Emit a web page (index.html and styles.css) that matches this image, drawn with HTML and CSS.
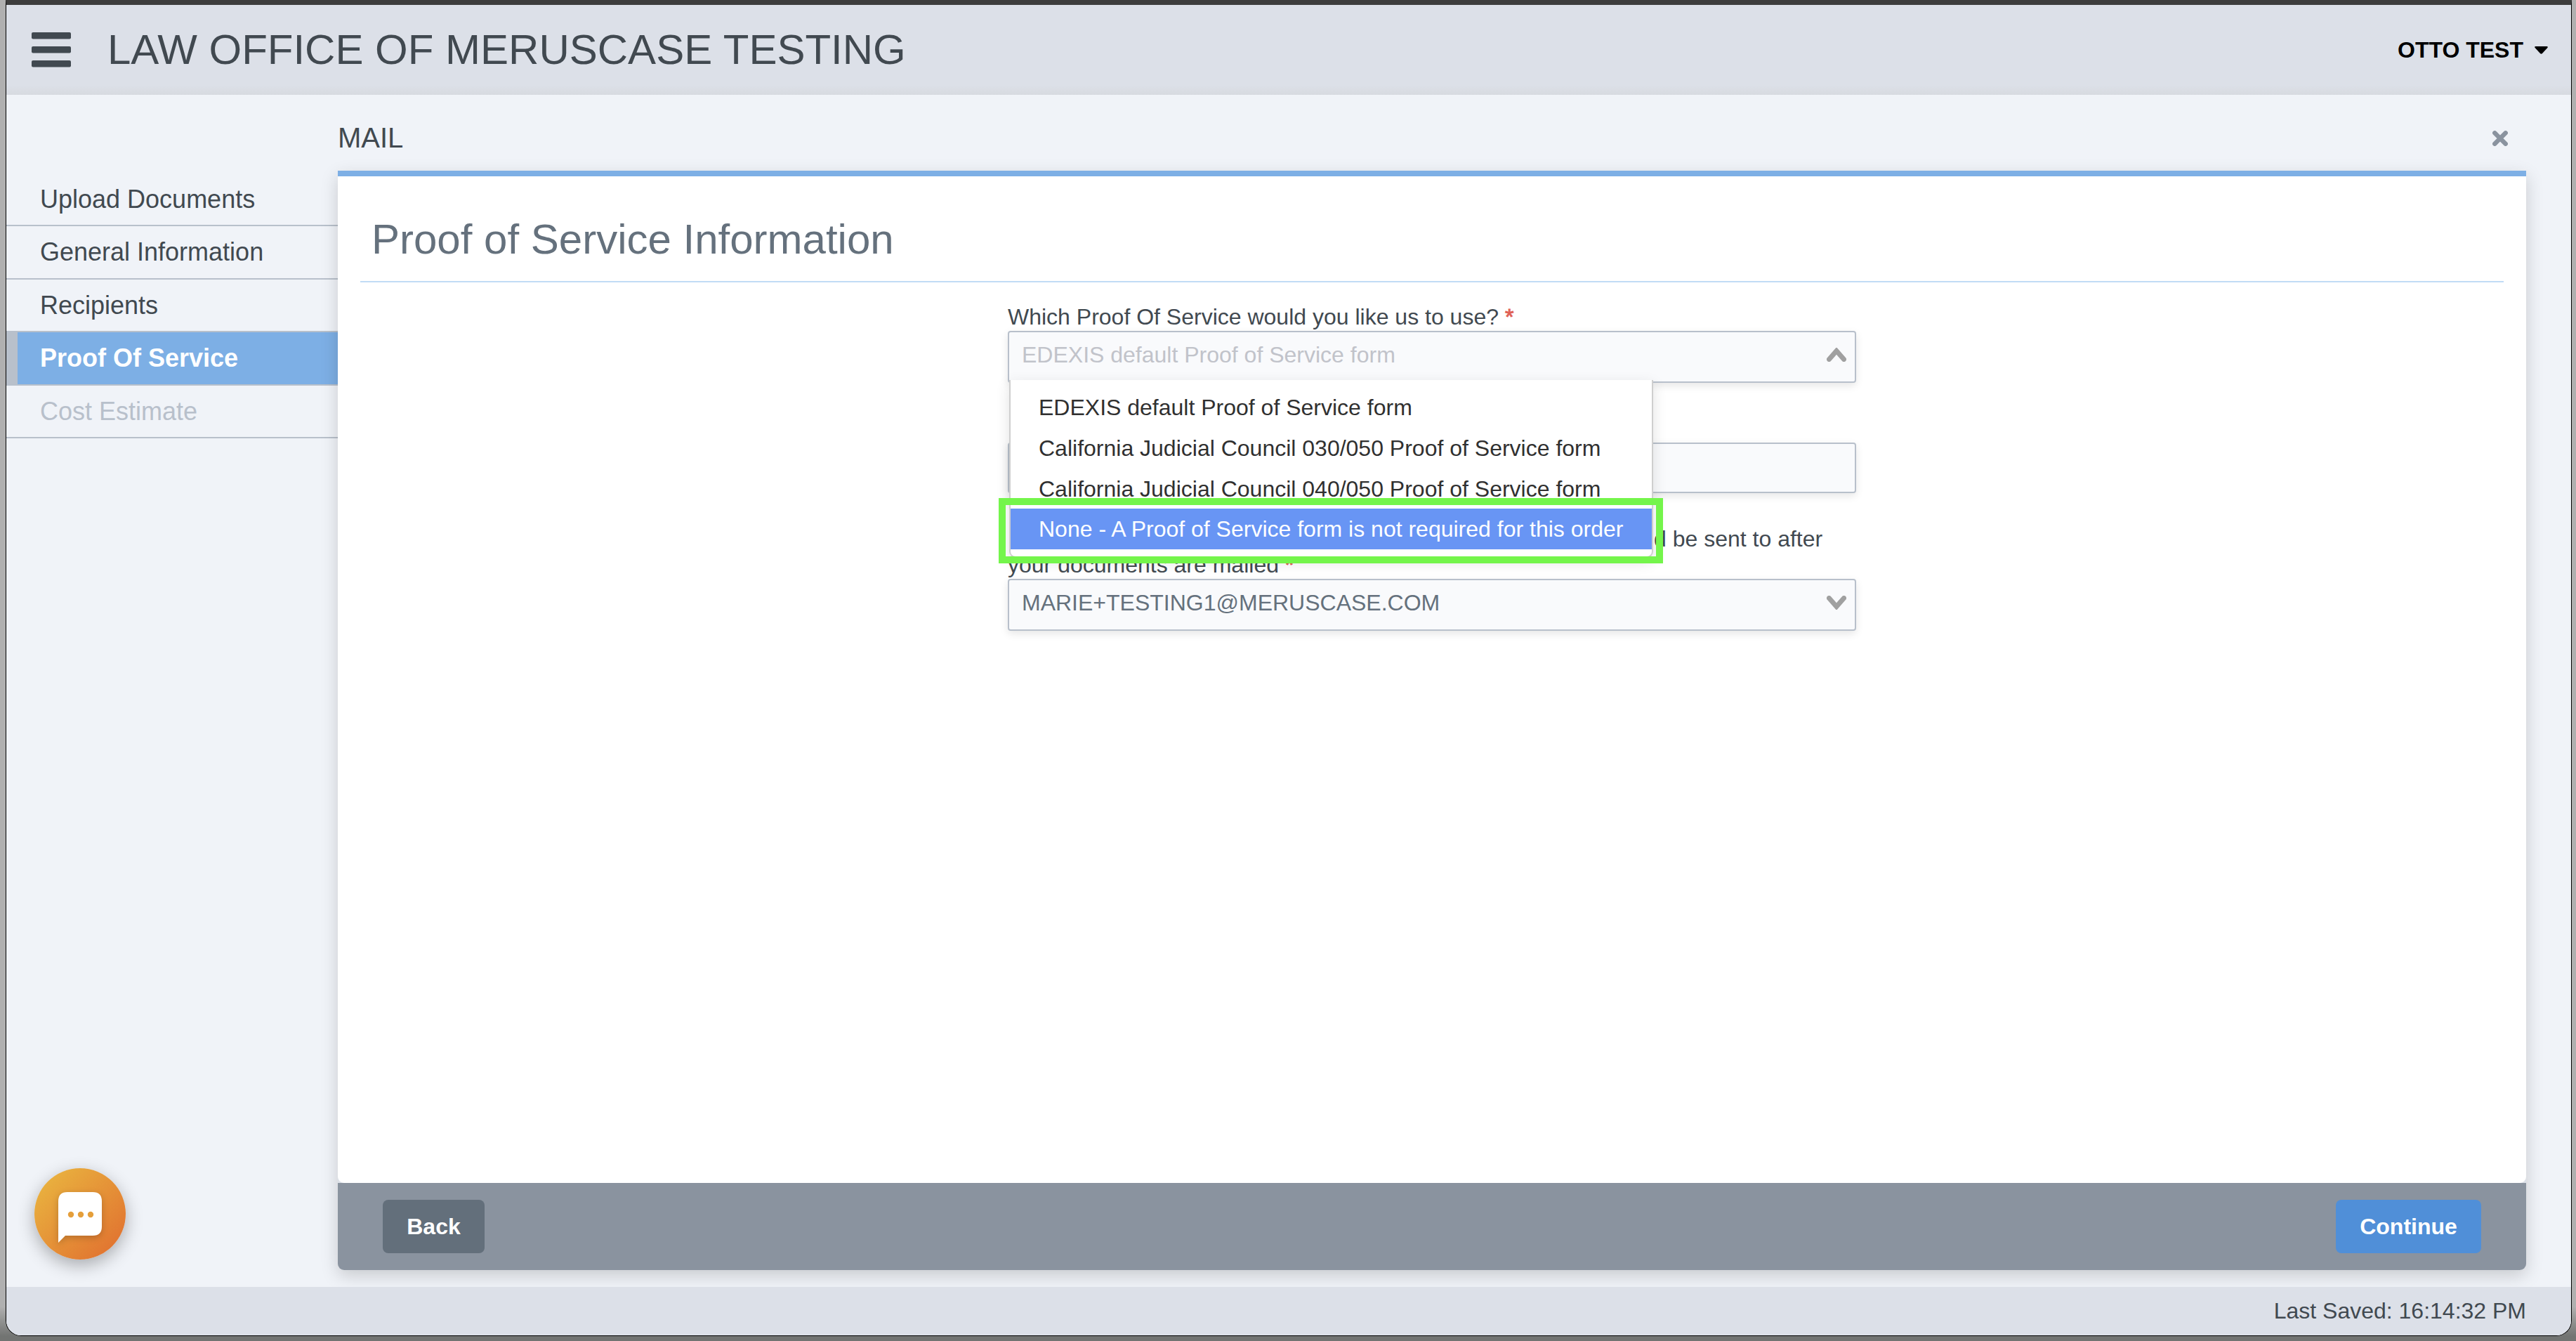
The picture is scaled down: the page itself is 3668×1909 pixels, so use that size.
FILE: index.html
```
<!DOCTYPE html>
<html lang="en">
<head>
    <meta charset="UTF-8" />
    <meta name="viewport" content="width=device-width, initial-scale=1" />
    <title>Mail - Proof of Service</title>
    <link rel="stylesheet" href="styles.css">
</head>
<body>
    <div class="window">
        <header class="top-bar">
            <svg class="menu-icon" width="56" height="50" viewBox="0 0 56 50">
                <rect x="0" y="0" width="56" height="9.5" rx="2"/>
                <rect x="0" y="20" width="56" height="9.5" rx="2"/>
                <rect x="0" y="40" width="56" height="9.5" rx="2"/>
            </svg>
            <h1>LAW OFFICE OF MERUSCASE TESTING</h1>
            <div class="user">
                <span>OTTO TEST</span>
                <svg width="19" height="11" viewBox="0 0 19 11">
                    <path d="M1.5 0h16q2 .3.9 2L11 10q-1.500 1.500-3 0L.6 2Q-.5.300 1.500 0z"/>
                </svg>
            </div>
        </header>

        <div class="main">
            <nav>
                <a class="nav-item">Upload Documents</a>
                <a class="nav-item">General Information</a>
                <a class="nav-item">Recipients</a>
                <a class="nav-item active">Proof Of Service</a>
                <a class="nav-item disabled">Cost Estimate</a>
            </nav>

            <section class="content">
                <div class="content-head">
                    <span>MAIL</span>
                    <svg class="close" width="22" height="22" viewBox="0 0 22 22">
                        <path d="M3.300 3.300L18.700 18.700M18.700 3.300L3.300 18.700"/>
                    </svg>
                </div>
                <div class="panel">
                    <div class="panel-body">
                        <h2>Proof of Service Information</h2>
                        <form>
                            <div class="field">
                                <label>Which Proof Of Service would you like us to use? <span class="req">*</span></label>
                                <div class="select placeholder">
                                    <span>EDEXIS default Proof of Service form</span>
                                    <svg width="28" height="20" viewBox="0 0 28 20"><path d="M3.500 16.500L14 4.500L24.500 16.500"/></svg>
                                    <ul class="dropdown">
                                        <li>EDEXIS default Proof of Service form</li>
                                        <li>California Judicial Council 030/050 Proof of Service form</li>
                                        <li>California Judicial Council 040/050 Proof of Service form</li>
                                        <li class="selected">None - A Proof of Service form is not required for this order</li>
                                    </ul>
                                    <div class="highlight"></div>
                                </div>
                            </div>
                            <div class="field">
                                <label></label>
                                <div class="select text-input"></div>
                            </div>
                            <div class="field">
                                <label><span class="tail">d be sent to after</span> your documents are mailed <span class="req">*</span></label>
                                <div class="select">
                                    <span>MARIE+TESTING1@MERUSCASE.COM</span>
                                    <svg width="28" height="20" viewBox="0 0 28 20"><path d="M3.500 3.500L14 15.500L24.500 3.500"/></svg>
                                </div>
                            </div>
                        </form>
                    </div>
                    <div class="panel-footer">
                        <button class="back">Back</button>
                        <button class="continue">Continue</button>
                    </div>
                </div>
            </section>
        </div>

        <footer class="status-bar">Last Saved: 16:14:32 PM</footer>

        <!-- floating chat button -->
        <div class="chat">
            <svg width="62" height="72" viewBox="0 0 62 72">
                <path fill="#fff" d="M13 0H49Q62 0 62 13V49Q62 62 49 62H10L0 72V13Q0 0 13 0z"/>
                <circle cx="18" cy="32" r="4.200"/>
                <circle cx="32" cy="32" r="4.200"/>
                <circle cx="46" cy="32" r="4.200"/>
            </svg>
        </div>
    </div>
</body>
</html>
```
FILE: styles.css
```
* {
    box-sizing: border-box;
}
body {
    margin: 0;
    height: 1909px;
    padding: 0 6px 7px 8px;
    overflow: hidden;
    background: linear-gradient(to bottom, #b0b0b0 0, #b0b0b0 1860px, #727472 1902px);
    font-family: "Helvetica Neue", Helvetica, "Liberation Sans", Arial, sans-serif;
    font-size: 32px;
    color: #414950;
}
.window {
    position: relative;
    height: 1902px;
    display: flex;
    flex-direction: column;
    border: 1px solid #000;
    border-top: 7px solid #3d3d3d;
    border-radius: 0 0 22px 22px;
    overflow: hidden;
    background: #f0f3f8;
}
.top-bar {
    height: 128px;
    flex-shrink: 0;
    display: flex;
    align-items: center;
    padding: 0 33px 0 36px;
    background: linear-gradient(to bottom, #dce0e8 0, #dce0e8 114px, #d7dae0 128px);
}
.menu-icon {
    fill: #414950;
}
h1 {
    margin: 0 0 0 52px;
    font-size: 60px;
    line-height: 70px;
    font-weight: normal;
}
.user {
    margin-left: auto;
    display: flex;
    align-items: center;
    gap: 16px;
    color: #000;
    font-weight: bold;
}
.main {
    flex-grow: 1;
    display: flex;
}
nav {
    width: 472px;
    padding-top: 111.5px;
}
.nav-item {
    display: block;
    height: 75.5px;
    padding-left: 48px;
    border-bottom: 2px solid #b8c0cb;
    font-size: 36px;
    line-height: 74px;
}
.nav-item.active {
    padding-left: 32px;
    border-left: 16px solid #b8c0cb;
    background: #7dafe5;
    color: #fff;
    font-weight: bold;
}
.nav-item.disabled {
    color: #b8c0cb;
}
.content {
    flex-grow: 1;
    margin-right: 64px;
}
.content-head {
    height: 108px;
    padding: 15px 26px 0 0;
    display: flex;
    align-items: center;
    justify-content: space-between;
    font-size: 40px;
}
.close {
    stroke: #8a939f;
    stroke-width: 6.5;
    stroke-linecap: round;
}
.panel {
    border-top: 8px solid #7dafe5;
    border-radius: 0 0 9px 9px;
    box-shadow: 0 8px 24px rgba(0, 0, 0, 0.17);
    background: #dce0e8;
}
.panel-body {
    height: 1433px;
    padding: 0 32px;
    background: #fff;
    border-radius: 0 0 9px 9px;
}
h2 {
    margin: 0;
    padding: 54px 16px 23px;
    border-bottom: 2px solid #c1dcf5;
    font-size: 60px;
    line-height: 72px;
    font-weight: normal;
    color: #65717d;
}
form {
    width: 1208px;
    margin: 31px auto 0;
    display: flex;
    flex-direction: column;
    gap: 47px;
}
label {
    display: block;
    min-height: 37px;
    margin-bottom: 1px;
    line-height: 37px;
}
.req {
    color: #df6055;
    -webkit-text-stroke: 1px #df6055;
}
/* first line ends beside the open list */
.tail {
    display: block;
    padding-left: 920px;
}
.select {
    position: relative;
    height: 74px;
    padding: 0 12px 6px 18px;
    display: flex;
    align-items: center;
    justify-content: space-between;
    border: 2px solid #b8c0cb;
    border-radius: 4px;
    background: #f9fafc;
    box-shadow: 0 4px 12px rgba(0, 0, 0, 0.1);
    color: #65717d;
}
.select.placeholder > span {
    color: #c1c3ca;
}
.select.text-input {
    height: 72px;
}
.select svg {
    fill: none;
    stroke: #a0a0a0;
    stroke-width: 7;
    stroke-linecap: round;
}
.dropdown {
    position: absolute;
    z-index: 1;
    top: 68px;
    left: 0;
    width: 917px;
    margin: 0;
    padding: 10px 0;
    list-style: none;
    background: #fff;
    border: 2px solid #cfcfcf;
    border-top: none;
    border-radius: 0 0 9px 9px;
    box-shadow: 0 6px 20px rgba(0, 0, 0, 0.12);
    color: #303030;
}
.dropdown li {
    height: 57.75px;
    line-height: 59px;
    padding-left: 40px;
    white-space: nowrap;
}
.dropdown .selected {
    background: #6895f4;
    color: #fff;
}
.highlight {
    position: absolute;
    z-index: 2;
    top: 236px;
    left: -15px;
    width: 946px;
    height: 93px;
    border: 10px solid #74f54b;
}
.panel-footer {
    height: 124px;
    padding: 0 64px;
    display: flex;
    align-items: center;
    justify-content: space-between;
    background: #8a939f;
    border-radius: 0 0 9px 9px;
}
button {
    height: 76px;
    padding: 0;
    border: none;
    border-radius: 8px;
    font: bold 32px "Helvetica Neue", Helvetica, "Liberation Sans", Arial, sans-serif;
    color: #fff;
}
.back {
    width: 145px;
    background: #636f7b;
}
.continue {
    width: 207px;
    background: #508fd8;
}
.status-bar {
    height: 69px;
    flex-shrink: 0;
    padding-right: 64px;
    text-align: right;
    line-height: 68px;
    background: #dce0e8;
}
.chat {
    position: absolute;
    left: 40px;
    top: 1656px;
    width: 130px;
    height: 130px;
    padding: 34px;
    border-radius: 50%;
    background: linear-gradient(135deg, #e9b23f 10%, #e17330 90%);
    box-shadow: 0 8px 24px rgba(0, 0, 0, 0.3);
}
.chat svg {
    display: block;
    fill: #e59f3b;
    filter: drop-shadow(0 3px 5px rgba(0, 0, 0, 0.2));
}
```
